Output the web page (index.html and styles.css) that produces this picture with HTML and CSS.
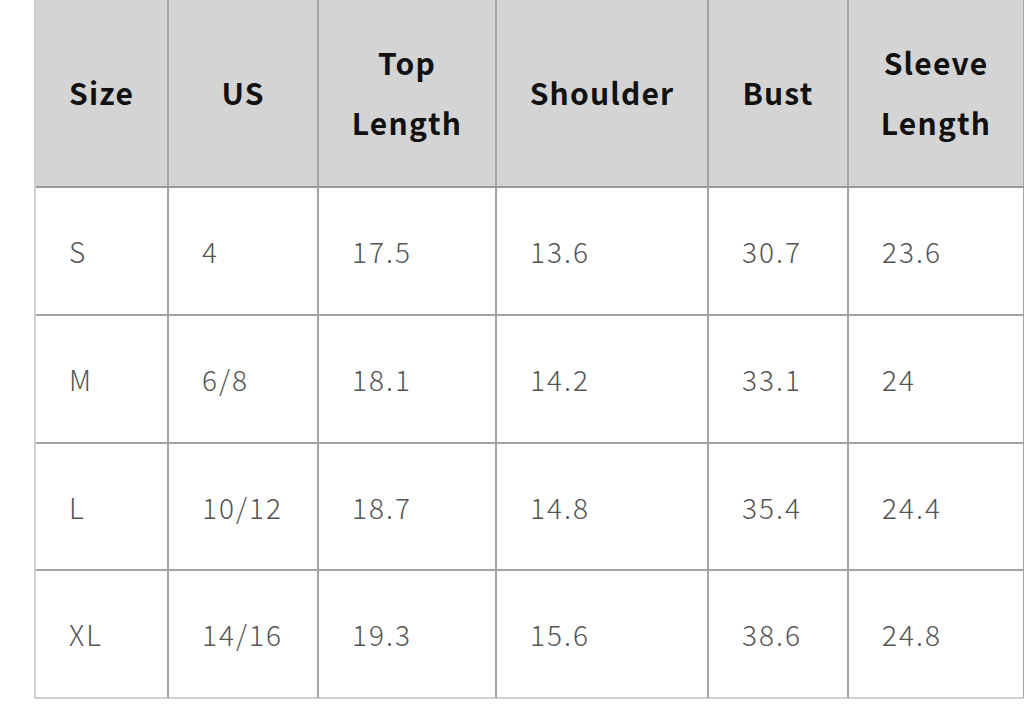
FILE: index.html
```html
<!DOCTYPE html>
<html>
<head>
<meta charset="utf-8">
<link rel="stylesheet" href="styles.css">
</head>
<body>
<div class="size-table">
  <div class="cell head">Size</div>
  <div class="cell head">US</div>
  <div class="cell head">Top<br>Length</div>
  <div class="cell head">Shoulder</div>
  <div class="cell head">Bust</div>
  <div class="cell head">Sleeve<br>Length</div>

  <div class="cell">S</div><div class="cell">4</div><div class="cell">17.5</div><div class="cell">13.6</div><div class="cell">30.7</div><div class="cell">23.6</div>
  <div class="cell">M</div><div class="cell">6/8</div><div class="cell">18.1</div><div class="cell">14.2</div><div class="cell">33.1</div><div class="cell">24</div>
  <div class="cell">L</div><div class="cell">10/12</div><div class="cell">18.7</div><div class="cell">14.8</div><div class="cell">35.4</div><div class="cell">24.4</div>
  <div class="cell last">XL</div><div class="cell last">14/16</div><div class="cell last">19.3</div><div class="cell last">15.6</div><div class="cell last">38.6</div><div class="cell last">24.8</div>
</div>
</body>
</html>
```
FILE: styles.css
```css
html, body {
  margin: 0;
  padding: 0;
  background: #ffffff;
  overflow: hidden;
}
body {
  padding-left: 34px;
  font-family: "Noto Sans CJK SC", "Noto Sans", sans-serif;
}
.size-table {
  display: grid;
  grid-template-columns: 133px 150px 178px 212px 140px 176px;
  grid-template-rows: 188px 128px 128px 127px 128px;
  width: 989px;
  border-left: 2px solid #cfcfcf;
}
.cell {
  box-sizing: border-box;
  border-right: 2px solid #a3a3a3;
  border-bottom: 2px solid #a3a3a3;
  display: flex;
  align-items: center;
  padding-left: 33px;
  font-size: 28px;
  font-weight: 300;
  letter-spacing: 2px;
  color: #555555;
}
.cell.head {
  background: #d4d4d4;
  justify-content: center;
  text-align: center;
  padding: 0 0 2px 0;
  font-weight: 700;
  font-size: 30px;
  line-height: 60px;
  letter-spacing: 1.2px;
  color: #111111;
  border-bottom-color: #9a9a9a;
}
.cell.last {
  border-bottom-color: #d0d0d0;
}
```
